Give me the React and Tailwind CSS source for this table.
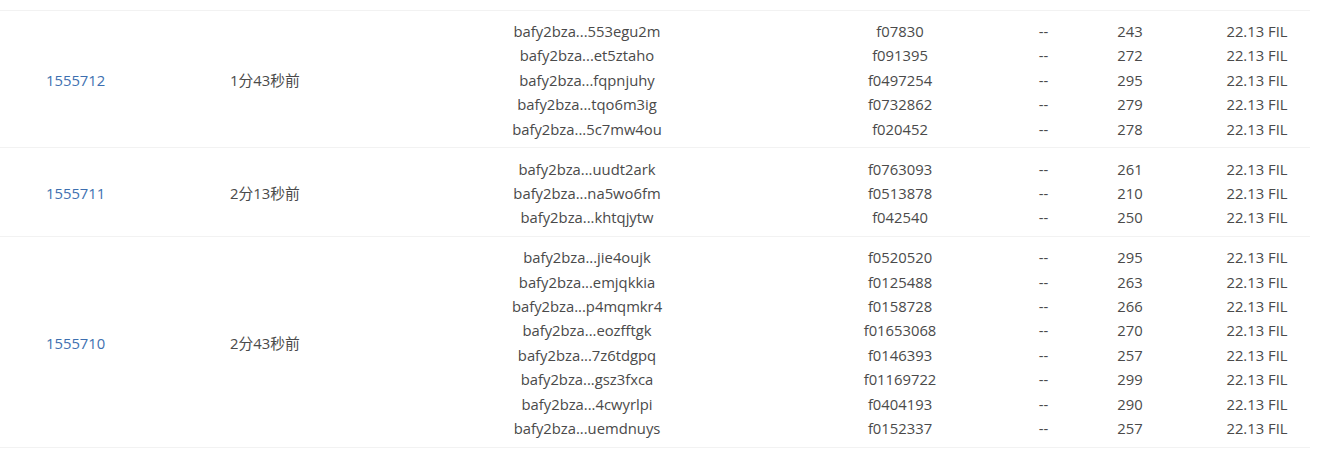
import React from "react";

const groups = [
  {
    height: "1555712",
    time: "1分43秒前",
    rows: [
      ["bafy2bza...553egu2m", "f07830", "243"],
      ["bafy2bza...et5ztaho", "f091395", "272"],
      ["bafy2bza...fqpnjuhy", "f0497254", "295"],
      ["bafy2bza...tqo6m3ig", "f0732862", "279"],
      ["bafy2bza...5c7mw4ou", "f020452", "278"],
    ],
  },
  {
    height: "1555711",
    time: "2分13秒前",
    rows: [
      ["bafy2bza...uudt2ark", "f0763093", "261"],
      ["bafy2bza...na5wo6fm", "f0513878", "210"],
      ["bafy2bza...khtqjytw", "f042540", "250"],
    ],
  },
  {
    height: "1555710",
    time: "2分43秒前",
    rows: [
      ["bafy2bza...jie4oujk", "f0520520", "295"],
      ["bafy2bza...emjqkkia", "f0125488", "263"],
      ["bafy2bza...p4mqmkr4", "f0158728", "266"],
      ["bafy2bza...eozfftgk", "f01653068", "270"],
      ["bafy2bza...7z6tdgpq", "f0146393", "257"],
      ["bafy2bza...gsz3fxca", "f01169722", "299"],
      ["bafy2bza...4cwyrlpi", "f0404193", "290"],
      ["bafy2bza...uemdnuys", "f0152337", "257"],
    ],
  },
];

export default function App() {
  return (
    <div
      className="w-[1332px] h-[456px] bg-white overflow-hidden pt-[10px] text-[14.8px] text-[#4a4a4a]"
      style={{ fontFamily: '"Open Sans", "Noto Sans CJK SC", sans-serif' }}
    >
      <div className="w-[1310px] border-t border-[#f2f2f2]">
        {groups.map((g) => (
          <div key={g.height} className="flex border-b border-[#f2f2f2] pt-2 pb-[6.5px]">
            <div className="w-[230px] shrink-0 pl-[46px] flex items-center text-[#3d6fb0]">{g.height}</div>
            <div className="w-[220px] shrink-0 flex items-center">{g.time}</div>
            <div className="flex flex-col">
              {g.rows.map((r) => (
                <div key={r[0]} className="flex h-[24.4px] items-center">
                  <div className="w-[274px] shrink-0 text-center">{r[0]}</div>
                  <div className="w-[76px] shrink-0" />
                  <div className="w-[200px] shrink-0 text-center">{r[1]}</div>
                  <div className="w-[87px] shrink-0 text-center">--</div>
                  <div className="w-[86px] shrink-0 text-center">{r[2]}</div>
                  <div className="w-[31px] shrink-0" />
                  <div className="w-[106px] shrink-0 text-center">22.13 FIL</div>
                </div>
              ))}
            </div>
          </div>
        ))}
      </div>
    </div>
  );
}
